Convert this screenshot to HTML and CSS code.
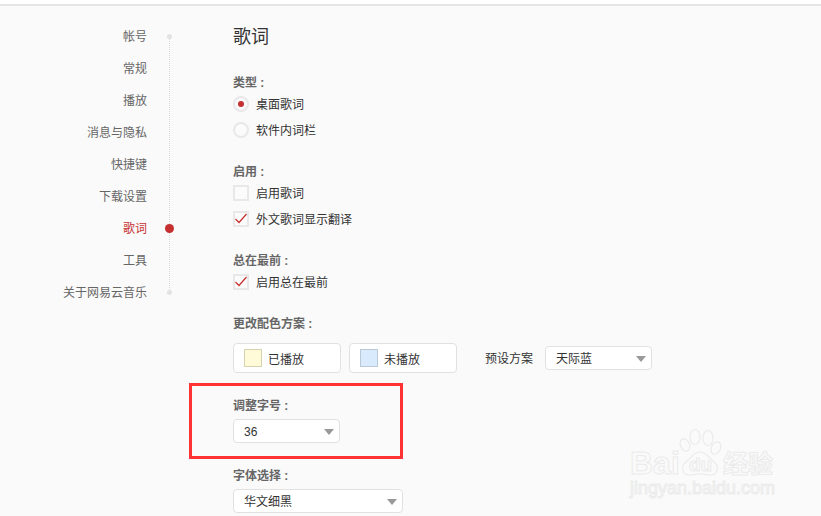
FILE: index.html
```html
<!DOCTYPE html>
<html lang="zh-CN">
<head>
  <meta charset="UTF-8">
  <title>设置</title>
  <link rel="stylesheet" href="styles.css">
</head>
<body>
  <div class="topbar"></div>

  <div class="page">
    <nav class="side">
      <a class="side-item end">帐号</a>
      <a class="side-item">常规</a>
      <a class="side-item">播放</a>
      <a class="side-item">消息与隐私</a>
      <a class="side-item">快捷键</a>
      <a class="side-item">下载设置</a>
      <a class="side-item active">歌词</a>
      <a class="side-item">工具</a>
      <a class="side-item end">关于网易云音乐</a>
    </nav>

    <main class="content">
      <h2 class="title">歌词</h2>

      <section class="group first">
        <h3>类型 :</h3>
        <div class="opt"><i class="radio on"></i>桌面歌词</div>
        <div class="opt"><i class="radio"></i>软件内词栏</div>
      </section>

      <section class="group">
        <h3>启用 :</h3>
        <div class="opt"><i class="check"></i>启用歌词</div>
        <div class="opt">
          <i class="check"><svg class="tick" viewBox="0 0 12 12"><path d="M0.5 6 L4 9.5 L11.5 1" fill="none" stroke="#c62f2f" stroke-width="1.2"/></svg></i>外文歌词显示翻译
        </div>
      </section>

      <section class="group">
        <h3>总在最前 :</h3>
        <div class="opt"><i class="check"><svg class="tick" viewBox="0 0 12 12"><path d="M0.5 6 L4 9.5 L11.5 1" fill="none" stroke="#c62f2f" stroke-width="1.2"/></svg></i>启用总在最前</div>
      </section>

      <section class="group">
        <h3>更改配色方案 :</h3>
        <div class="colors">
          <div class="color-btn"><i class="swatch played"></i>已播放</div>
          <div class="color-btn"><i class="swatch unplayed"></i>未播放</div>
          <span class="preset-label">预设方案</span>
          <div class="select preset">天际蓝</div>
        </div>
      </section>

      <section class="group size">
        <h3>调整字号 :</h3>
        <div class="select size-select">36</div>
      </section>

      <section class="group size">
        <h3>字体选择 :</h3>
        <div class="select font-select">华文细黑</div>
      </section>
    </main>
  </div>

  <!-- annotation and watermark on top of the screenshot -->
  <div class="redbox"></div>

  <div class="watermark">
    <svg class="paw" width="70" height="60" viewBox="0 0 70 60">
      <g fill="#fafafa" stroke="#ebebeb" stroke-width="1.2">
        <ellipse cx="17" cy="20" rx="4.5" ry="6.5" transform="rotate(-25 17 20)"/>
        <ellipse cx="27" cy="12" rx="5" ry="7.5"/>
        <ellipse cx="40" cy="13" rx="5" ry="7.5"/>
        <ellipse cx="48" cy="23" rx="4.5" ry="6.5" transform="rotate(25 48 23)"/>
        <path d="M32 27 C38 27 40 32 45 36 C52 41 50 50 43 50 C38 50 36 49 32 49 C28 49 26 50 21 50 C14 50 12 41 19 36 C24 32 26 27 32 27 Z"/>
      </g>
    </svg>
    <span class="wm-bai">Bai</span>
    <span class="wm-du">du</span>
    <span class="wm-cn">经验</span>
    <span class="wm-url">jingyan.baidu.com</span>
  </div>
</body>
</html>
```

FILE: styles.css
```css
* {
  box-sizing: border-box;
}

html, body {
  height: 100%;
}

body {
  margin: 0;
  overflow: hidden;
  position: relative;
  background-color: #fafafa;
  color: #333;
  font-family: "Liberation Sans", "Noto Sans CJK SC", sans-serif;
  font-size: 12px;
}

.topbar {
  height: 6px;
  background-color: #fff;
  border-bottom: 2px solid #e5e5e5;
}

.page {
  display: flex;
}

/* left menu with its dotted line */
.side {
  position: relative;
  width: 233px;
  flex: none;
  padding-top: 15px;
}

.side::before {
  content: "";
  position: absolute;
  left: 169px;
  top: 31px;
  height: 255px;
  border-left: 1px dotted #d8d8d8;
}

.side-item {
  display: block;
  position: relative;
  width: 147px;
  height: 32px;
  line-height: 32px;
  text-align: right;
  color: #666;
}

.side-item.end::after,
.side-item.active::after {
  content: "";
  position: absolute;
  border-radius: 50%;
}

.side-item.end::after {
  left: 167px;
  top: 13px;
  width: 5px;
  height: 5px;
  background-color: #e3e3e3;
}

.side-item.active {
  color: #c62f2f;
}

.side-item.active::after {
  left: 165px;
  top: 11px;
  width: 9px;
  height: 9px;
  background-color: #c62f2f;
}

.content {
  flex: 1;
}

.title {
  margin: 19px 0 0;
  height: 24px;
  line-height: 24px;
  font-size: 18px;
  font-weight: normal;
  color: #333;
}

.group {
  margin-top: 19px;
}

.group.first {
  margin-top: 24px;
}

.group.size {
  margin-top: 23px;
}

.group h3 {
  margin: 0;
  height: 18px;
  line-height: 20px;
  font-size: 12px;
  color: #666;
}

.opt {
  display: flex;
  align-items: center;
  height: 26px;
  padding-bottom: 2px;
}

.radio, .check {
  display: flex;
  align-items: center;
  justify-content: center;
  width: 16px;
  height: 16px;
  margin-top: 2px;
  margin-right: 7px;
  background-color: #fbfbfb;
  border: 2px solid #e8e8e8;
}

.radio {
  border-radius: 50%;
}

.radio.on::before {
  content: "";
  width: 6px;
  height: 6px;
  border-radius: 50%;
  background-color: #c62f2f;
}

.tick {
  width: 12px;
  height: 12px;
}

.colors {
  display: flex;
  align-items: center;
  margin-top: 11px;
}

.color-btn {
  display: flex;
  align-items: center;
  width: 108px;
  height: 30px;
  margin-right: 8px;
  padding-left: 10px;
  background-color: #fff;
  border: 1px solid #e1e1e1;
  border-radius: 4px;
}

.swatch {
  width: 18px;
  height: 18px;
  margin-right: 6px;
  border: 1px solid;
}

.swatch.played {
  background-color: #fffbd8;
  border-color: #d6d2ae;
}

.swatch.unplayed {
  background-color: #d9eafd;
  border-color: #b9c9d6;
}

.preset-label {
  margin-left: 20px;
  margin-right: 12px;
  margin-bottom: 2px;
}

.select {
  position: relative;
  height: 24px;
  line-height: 24px;
  padding-left: 10px;
  background-color: #fff;
  border: 1px solid #e1e1e1;
  border-radius: 4px;
}

.select::after {
  content: "";
  position: absolute;
  right: 5px;
  top: 9px;
  border-left: 5px solid transparent;
  border-right: 5px solid transparent;
  border-top: 6px solid #999;
}

.preset {
  width: 107px;
}

.size-select {
  width: 107px;
  margin-top: 5px;
}

.font-select {
  width: 170px;
  margin-top: 5px;
}

/* red annotation box */
.redbox {
  position: absolute;
  left: 189px;
  top: 383px;
  width: 214px;
  height: 76px;
  border: 3px solid #f33;
}

.watermark {
  position: absolute;
  left: 630px;
  top: 425px;
  width: 150px;
  height: 72px;
  color: #fafafa;
  -webkit-text-stroke: 1px #ebebeb;
}

.paw {
  position: absolute;
  left: 38px;
  top: 0;
}

.wm-bai, .wm-du, .wm-cn, .wm-url {
  position: absolute;
  white-space: nowrap;
  line-height: 1;
}

.wm-bai {
  left: 0;
  top: 22px;
  font-size: 32px;
  font-weight: bold;
}

.wm-du {
  left: 59px;
  top: 30px;
  font-size: 19px;
  font-weight: bold;
}

.wm-cn {
  left: 93px;
  top: 27px;
  font-size: 25px;
  font-weight: bold;
}

.wm-url {
  left: 0;
  top: 54px;
  font-size: 18px;
}
```
